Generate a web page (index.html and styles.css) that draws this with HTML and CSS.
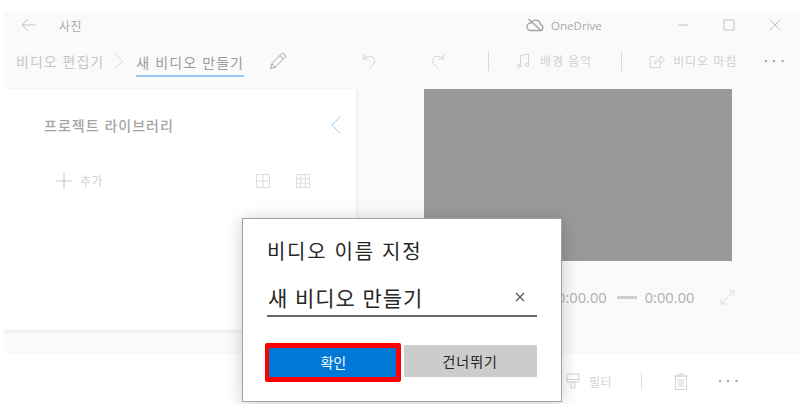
FILE: index.html
```html
<!DOCTYPE html>
<html lang="ko">
<head>
    <meta charset="UTF-8">
    <meta name="viewport" content="width=device-width, initial-scale=1.0">
    <title>사진</title>
    <link rel="stylesheet" href="styles.css">
</head>
<body>

<div class="window">
    <div class="titlebar">
        <svg class="back-icon" width="15" height="14" viewBox="0 0 15 14"><path d="M14.500 7H1M7 1L1 7l6 6"/></svg>
        <span class="app-name">사진</span>
        <div class="onedrive">
            <svg class="cloud" width="18" height="14" viewBox="0 0 18 14"><path d="M4.500 12.500h9.500a3 3 0 0 0 .6-5.900 5 5 0 0 0-9.400-1.800A3.800 3.800 0 0 0 4.500 12.500zM2.500 1l13 12"/></svg>
            <span>OneDrive</span>
        </div>
        <div class="win-controls">
            <svg width="12" height="12" viewBox="0 0 12 12"><path d="M1 6h10"/></svg>
            <svg width="12" height="12" viewBox="0 0 12 12"><path d="M1 1h10v10H1z"/></svg>
            <svg width="12" height="12" viewBox="0 0 12 12"><path d="M.5.500l11 11M11.500.500l-11 11"/></svg>
        </div>
    </div>

    <div class="toolbar">
        <span class="crumb">비디오 편집기</span>
        <svg class="crumb-sep" width="10" height="16" viewBox="0 0 10 16"><path d="M1 1l8 7-8 7"/></svg>
        <span class="crumb-current">새 비디오 만들기</span>
        <svg class="pencil" width="18" height="18" viewBox="0 0 18 18"><path d="M1.500 16.500l1.200-4.700L12.500 2a1.700 1.700 0 0 1 2.400 0l1 1a1.700 1.700 0 0 1 0 2.400L6.200 15.300zM2.700 11.800l3.500 3.500M11 3.500l3.500 3.500"/></svg>
        <svg class="undo" width="14" height="16" viewBox="0 0 14 16"><path d="M1.500 1v5h5M1.500 6C4 2.500 11 2 12.500 6.500 13.500 10 10 12.500 7 15.500"/></svg>
        <svg class="redo" width="14" height="16" viewBox="0 0 14 16"><path d="M12.500 1v5h-5M12.500 6C10 2.500 3 2 1.500 6.500 .5 10 4 12.500 7 15.500"/></svg>
        <i class="divider first"></i>
        <svg class="tool-icon" width="14" height="16" viewBox="0 0 14 16"><path d="M4.500 13V2.500L12.500 1v10.500"/><circle cx="3" cy="13.300" r="1.600"/><circle cx="11" cy="11.800" r="1.600"/></svg>
        <span class="tool-label">배경 음악</span>
        <i class="divider"></i>
        <svg class="tool-icon" width="16" height="16" viewBox="0 0 16 16"><path d="M6 3.500H1v11h10.500V10M5.500 11c.5-3.500 3-5.500 6-5.500V2.500L15.500 7l-4 4V8c-2.500 0-4.500 1-6 3z"/></svg>
        <span class="tool-label share-label">비디오 마침</span>
        <svg class="dots top-dots" width="20" height="4" viewBox="0 0 20 4"><circle cx="2" cy="2" r="1.200"/><circle cx="10" cy="2" r="1.200"/><circle cx="18.500" cy="2" r="1.200"/></svg>
    </div>

    <div class="main">
        <div class="library">
            <div class="library-head">
                <h2>프로젝트 라이브러리</h2>
                <svg class="collapse" width="10" height="18" viewBox="0 0 10 18"><path d="M9.500 .5L1 9l8.500 8.500"/></svg>
            </div>
            <div class="library-tools">
                <svg class="plus" width="16" height="16" viewBox="0 0 16 16"><path d="M8 0v16M0 8h16"/></svg>
                <span class="add-label">추가</span>
                <svg class="grid-one" width="14" height="14" viewBox="0 0 14 14"><path d="M.5.500h13v13H.5zM7 .5v13M.5 7h13"/></svg>
                <svg class="grid-two" width="14" height="14" viewBox="0 0 14 14"><path d="M.5.500h13v13H.5zM4.800.500v13M9.200.500v13M.5 4.800h13M.5 9.200h13"/></svg>
            </div>
        </div>
        <div class="preview-pane">
            <div class="preview"></div>
            <div class="timing">
                <span>0:00.00</span>
                <i class="time-dash"></i>
                <span>0:00.00</span>
                <svg class="expand" width="15" height="15" viewBox="0 0 15 15"><path d="M1 14L14 1M9 1h5v5M1 9v5h5"/></svg>
            </div>
        </div>
    </div>

    <div class="bottom-bar">
        <svg class="tool-icon filter-icon" width="14" height="16" viewBox="0 0 14 16"><path d="M1 1h12v8H1zM1 6.500h12M5 9h4v6H5z"/></svg>
        <span class="filter-label">필터</span>
        <i class="divider short"></i>
        <svg class="trash" width="14" height="17" viewBox="0 0 14 17"><path d="M1.500 3h11v13.500h-11zM0 3h14M5 3V1h4v2M5 6v8M7 6v8M9 6v8"/></svg>
        <svg class="dots bottom-dots" width="20" height="4" viewBox="0 0 20 4"><circle cx="2" cy="2" r="1.200"/><circle cx="10" cy="2" r="1.200"/><circle cx="18.500" cy="2" r="1.200"/></svg>
    </div>
</div>

<div class="dialog">
    <div class="dialog-title">비디오 이름 지정</div>
    <div class="name-field">
        <span>새 비디오 만들기</span>
        <svg width="10" height="10" viewBox="0 0 10 10"><path d="M1 1l8 8M9 1L1 9"/></svg>
    </div>
    <div class="dialog-buttons">
        <button class="btn-ok">확인</button>
        <button class="btn-skip">건너뛰기</button>
    </div>
</div>

</body>
</html>
```

FILE: styles.css
```css
html, body {
    margin: 0;
    height: 404px;
    overflow: hidden;
    background-color: #fff;
}
body {
    font-family: "Noto Sans CJK KR", "Open Sans", sans-serif;
    position: relative;
    padding: 12px 0 0 4px;
    box-sizing: border-box;
}
svg {
    fill: none;
    stroke: #c4c4c4;
    stroke-width: 1;
    flex-shrink: 0;
    display: block;
}
.window {
    height: 392px;
    display: flex;
    flex-direction: column;
    background-color: #fafafa;
    overflow: hidden;
}
.titlebar {
    height: 26px;
    display: flex;
    align-items: center;
    padding-left: 17px;
}
.app-name {
    margin-left: 23px;
    font-size: 12px;
    letter-spacing: 0.5px;
    color: #a8a8a8;
}
.onedrive {
    margin-left: 444px;
    display: flex;
    align-items: center;
    gap: 7px;
    font-family: "Open Sans", sans-serif;
    font-size: 11.500px;
    color: #a8a8a8;
}
.cloud {
    stroke: #a6a6a6;
    stroke-width: 1.400;
}
.win-controls {
    margin-left: 75px;
    display: flex;
    gap: 34px;
}
.toolbar {
    height: 51px;
    display: flex;
    align-items: center;
    padding-left: 12px;
    padding-bottom: 6px;
    box-sizing: border-box;
}
.crumb {
    font-size: 14px;
    letter-spacing: 1px;
    color: #c6c6c6;
}
.crumb-sep {
    margin-left: 10px;
    stroke: #dedede;
}
.crumb-current {
    margin-left: 12px;
    padding-top: 4px;
    font-size: 14px;
    letter-spacing: 1.100px;
    color: #9a9a9a;
    line-height: 26px;
    border-bottom: 2px solid #99c9f2;
}
.pencil {
    margin-left: 25px;
    stroke: #a0a0a0;
}
.undo {
    margin-left: 75px;
    stroke: #d4d4d4;
}
.redo {
    margin-left: 55px;
    stroke: #d4d4d4;
}
.divider {
    width: 1px;
    height: 20px;
    background-color: #d8d8d8;
}
.divider.first {
    margin-left: 43px;
}
.tool-icon {
    margin-left: 27px;
    stroke: #d4d4d4;
}
.tool-label {
    margin-left: 10px;
    margin-right: 29px;
    font-size: 12px;
    letter-spacing: 0.900px;
    color: #d0d0d0;
}
.share-label {
    margin-left: 8px;
}
.dots {
    fill: #a8a8a8;
    stroke: none;
}
.top-dots {
    margin-left: -2px;
}
.main {
    height: 241px;
    display: flex;
}
.library {
    width: 352px;
    background-color: #fff;
    box-shadow: 0 1px 5px rgba(0, 0, 0, 0.09);
    padding: 26px 15px 0 40px;
    box-sizing: border-box;
}
.library-head {
    display: flex;
    align-items: center;
    justify-content: space-between;
}
.library-head h2 {
    margin: 0;
    font-size: 14px;
    font-weight: 500;
    letter-spacing: 1px;
    color: #a5a5a5;
}
.collapse {
    stroke: #99c9f2;
}
.library-tools {
    margin-top: 37px;
    display: flex;
    align-items: center;
    padding-left: 12px;
}
.add-label {
    margin-left: 8px;
    font-size: 12px;
    letter-spacing: 0.500px;
    color: #d2d2d2;
}
.grid-one {
    margin-left: 153px;
    stroke: #dcdcdc;
}
.grid-two {
    margin-left: 26px;
    stroke: #dcdcdc;
}
.preview-pane {
    padding-left: 68px;
}
.preview {
    width: 308px;
    height: 172px;
    background-color: #999;
}
.timing {
    margin-top: 26px;
    padding-left: 133px;
    display: flex;
    align-items: center;
    font-family: "Open Sans", sans-serif;
    font-size: 14.700px;
    color: #b0b0b0;
}
.time-dash {
    width: 20px;
    height: 3px;
    margin: 0 8px 0 10px;
    background-color: #cfcfcf;
}
.expand {
    margin-left: 26px;
    stroke: #dcdcdc;
}
.bottom-bar {
    margin-top: 24px;
    flex: 1;
    background-color: #fff;
    display: flex;
    align-items: center;
    padding: 4px 0 0 535px;
    box-sizing: border-box;
}
.filter-icon {
    margin-left: 27px;
}
.filter-label {
    margin-left: 9px;
    font-size: 12px;
    letter-spacing: 0.500px;
    color: #d4d4d4;
}
.divider.short {
    height: 16px;
    margin-left: 29px;
}
.trash {
    margin-left: 32px;
    stroke: #d4d4d4;
}
.bottom-dots {
    margin-left: 30px;
}
.dialog {
    position: absolute;
    left: 242px;
    top: 218px;
    width: 320px;
    height: 184px;
    box-sizing: border-box;
    background-color: #fff;
    border: 1px solid #a0a0a0;
    box-shadow: 0 2px 16px rgba(0, 0, 0, 0.2);
    padding: 16px 24px 0 24px;
}
.dialog-title {
    font-size: 20px;
    line-height: 32px;
    letter-spacing: 1.700px;
    color: #262626;
}
.name-field {
    margin-top: 12px;
    height: 36px;
    display: flex;
    align-items: center;
    justify-content: space-between;
    padding: 0 12px 0 1px;
    border-bottom: 2px solid #666;
    font-size: 21px;
    letter-spacing: 0.900px;
    color: #262626;
}
.name-field svg {
    stroke: #555;
    stroke-width: 1.300;
}
.dialog-buttons {
    margin: 26px 0 0 -2px;
    display: flex;
    align-items: flex-start;
}
.dialog-buttons button {
    font-family: inherit;
    font-size: 14px;
}
.btn-ok {
    width: 136px;
    height: 39px;
    box-sizing: border-box;
    padding: 0 0 2px 2px;
    background-color: #0078d7;
    color: #fff;
    border: solid #f00;
    border-width: 5px 5px 5px 4px;
    border-radius: 2px;
}
.btn-skip {
    width: 134px;
    height: 32px;
    margin: 2px 0 0 3px;
    padding: 0;
    border: none;
    letter-spacing: 1px;
    background-color: #ccc;
    color: #222;
}
```
